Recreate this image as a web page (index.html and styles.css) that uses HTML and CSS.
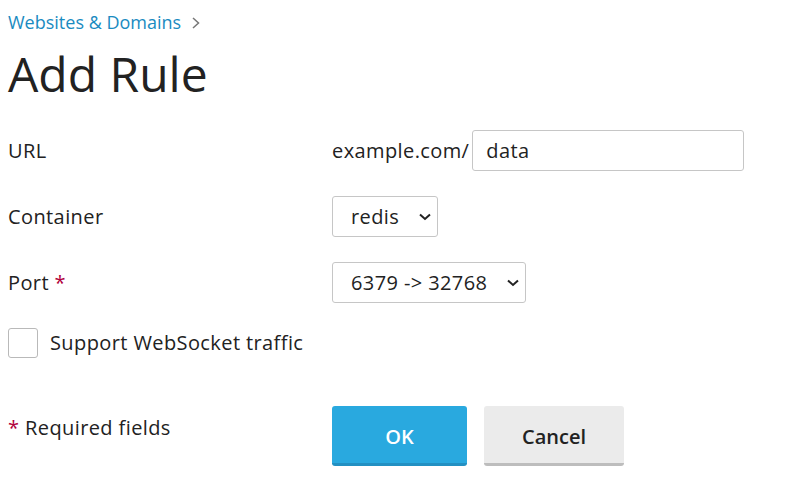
FILE: index.html
```html
<!DOCTYPE html>
<html>
<head>
<meta charset="utf-8">
<link rel="stylesheet" href="styles.css">
</head>
<body>
<nav class="breadcrumb">
  <a href="#" class="crumb">Websites &amp; Domains</a>
  <svg class="crumb-sep" width="8" height="12" viewBox="0 0 8 12"><path d="M1 1 L6.5 6 L1 11" fill="none" stroke="#777" stroke-width="1.5"/></svg>
</nav>
<h1 class="title">Add Rule</h1>
<form class="form">
  <div class="row">
    <label class="label">URL</label>
    <div class="control url-control">
      <span class="prefix">example.com/</span>
      <input class="text-input" type="text" value="data">
    </div>
  </div>
  <div class="row">
    <label class="label">Container</label>
    <div class="control">
      <span class="select-wrap">
        <select class="select"><option>redis</option></select>
        <svg class="chev" width="12" height="8" viewBox="0 0 12 8"><path d="M1 1.5 L6 6 L11 1.5" fill="none" stroke="#222" stroke-width="2"/></svg>
      </span>
    </div>
  </div>
  <div class="row">
    <label class="label">Port <span class="req">*</span></label>
    <div class="control">
      <span class="select-wrap">
        <select class="select"><option>6379 -&gt; 32768</option></select>
        <svg class="chev" width="12" height="8" viewBox="0 0 12 8"><path d="M1 1.5 L6 6 L11 1.5" fill="none" stroke="#222" stroke-width="2"/></svg>
      </span>
    </div>
  </div>
  <div class="check-row">
    <span class="checkbox"></span>
    <span class="check-label">Support WebSocket traffic</span>
  </div>
  <div class="row buttons-row">
    <div class="label req-note"><span class="req">*</span> Required fields</div>
    <div class="control buttons">
      <button type="button" class="btn btn-primary">OK</button>
      <button type="button" class="btn btn-default">Cancel</button>
    </div>
  </div>
</form>
</body>
</html>
```
FILE: styles.css
```css
body {
  margin: 8px;
  font-family: "Open Sans", "Liberation Sans", sans-serif;
  color: #222;
  background: #fff;
}
.breadcrumb {
  display: flex;
  align-items: center;
  gap: 11px;
  padding-top: 2px;
  height: 24px;
}
.crumb {
  font-size: 18px;
  line-height: 24px;
  color: #1a8bc1;
  text-decoration: none;
}
.crumb-sep { margin-top: 1px; }
.title {
  margin: 12px 0 0;
  font-size: 48px;
  line-height: 56px;
  font-weight: 400;
  color: #222;
}
.form {
  margin-top: 28px;
  display: flex;
  flex-direction: column;
}
.row {
  display: grid;
  grid-template-columns: 324px auto;
  align-items: center;
  min-height: 41px;
  margin-bottom: 25px;
}
.label {
  font-size: 20px;
  line-height: 24px;
  letter-spacing: 0.4px;
}
.req { color: #b1003b; }
.control {
  display: flex;
  align-items: center;
  font-size: 20px;
  letter-spacing: 0.4px;
}
.url-control { gap: 3px; }
.prefix { line-height: 24px; }
.text-input {
  box-sizing: border-box;
  width: 272px;
  height: 41px;
  border: 1px solid #c6c6c6;
  border-radius: 3px;
  padding: 0 13px;
  font: inherit;
  font-size: 20px;
  letter-spacing: 0.4px;
  color: #222;
  outline: none;
}
.select-wrap {
  position: relative;
  display: inline-block;
}
.select {
  -webkit-appearance: none;
  appearance: none;
  box-sizing: border-box;
  height: 41px;
  border: 1px solid #c6c6c6;
  border-radius: 3px;
  background: #fff;
  padding: 0 37px 0 18px;
  font: inherit;
  font-size: 20px;
  letter-spacing: 0.4px;
  color: #222;
}
.chev {
  position: absolute;
  right: 7px;
  top: 17px;
  pointer-events: none;
}
.check-row {
  display: flex;
  align-items: center;
  gap: 12px;
  margin-bottom: 48px;
}
.checkbox {
  box-sizing: border-box;
  width: 30px;
  height: 30px;
  border: 1px solid #b9b9b9;
  border-radius: 3px;
  background: #fff;
}
.check-label {
  font-size: 20px;
  line-height: 24px;
  letter-spacing: 0.4px;
}
.buttons-row { align-items: start; }
.req-note { padding-top: 10px; }
.buttons { gap: 17px; letter-spacing: 0; }
.btn {
  box-sizing: border-box;
  height: 60px;
  border: 0;
  border-bottom: 3px solid;
  border-radius: 3px;
  font-family: inherit;
  font-size: 20px;
  font-weight: 600;
  padding: 3px 0 0;
}
.btn-primary {
  width: 135px;
  background: #29a9df;
  border-bottom-color: #2390c2;
  color: #fff;
}
.btn-default {
  width: 140px;
  background: #ebebeb;
  border-bottom-color: #bdbdbd;
  color: #222;
}
```
